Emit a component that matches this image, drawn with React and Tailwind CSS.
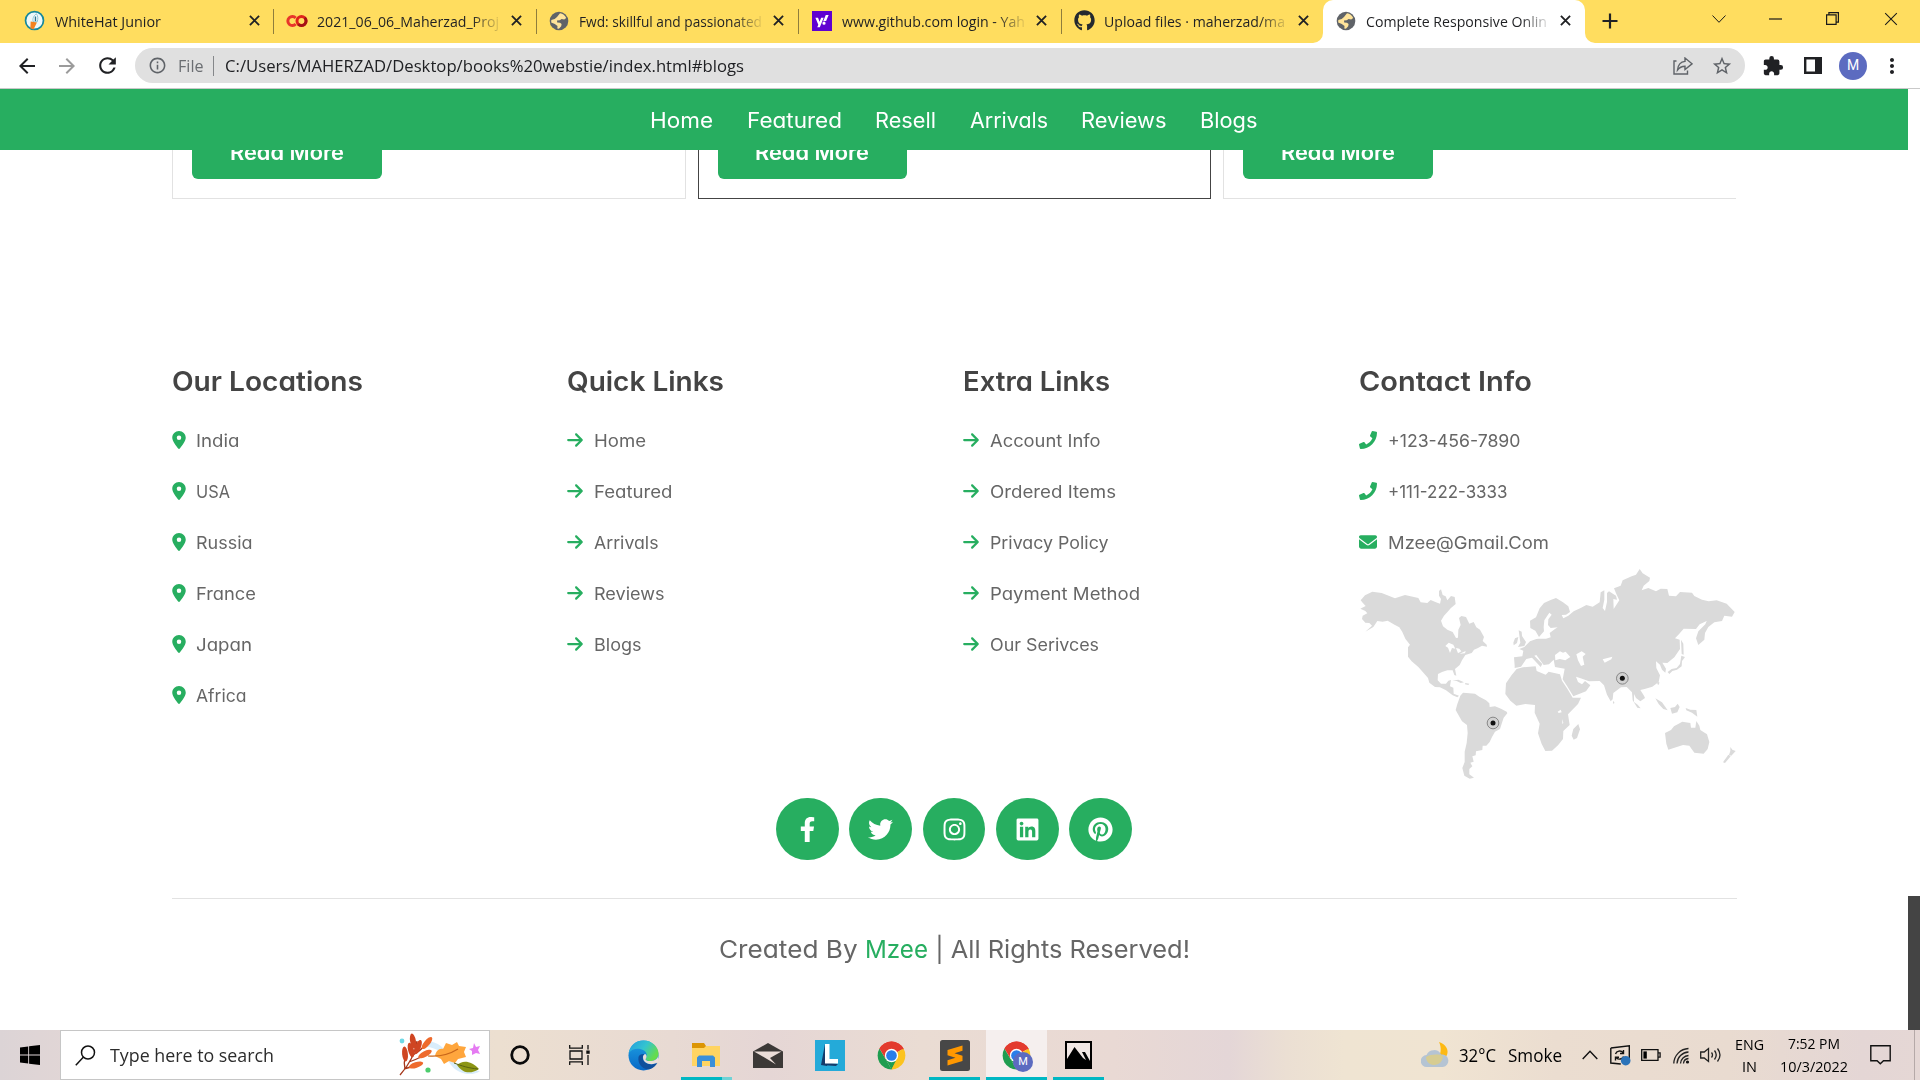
import { useLayoutEffect, useRef } from "react";
import { FaPhone, FaFacebookF, FaTwitter, FaInstagram, FaLinkedin, FaPinterest, FaGithub, FaYahoo } from "react-icons/fa";
import { FaLocationDot, FaArrowRight, FaEnvelope } from "react-icons/fa6";
import { MdExtension, MdStarBorder, MdMoreVert, MdRefresh, MdArrowBack, MdArrowForward, MdInfoOutline } from "react-icons/md";

/* Single-line text spanning a given width: a slight horizontal stretch first, tracking for the rest. */
function Fit({ w, className = "", children }) {
  const ref = useRef(null);
  useLayoutEffect(() => {
    const el = ref.current;
    el.style.letterSpacing = "0px";
    el.style.transform = "none";
    el.style.width = "auto";
    const natural = el.getBoundingClientRect().width;
    const stretch = Math.min(1.09, Math.max(0.9, w / natural));
    const n = el.textContent.length;
    el.style.letterSpacing = (w / stretch - natural) / n + "px";
    el.style.width = w + "px";
    el.style.transform = `scaleX(${stretch})`;
  }, [w]);
  return (
    <span ref={ref} className={"inline-block shrink-0 origin-left whitespace-pre " + className}>
      {children}
    </span>
  );
}

const Globe = () => (
  <svg viewBox="0 0 20 20" className="h-5 w-5">
    <circle cx="10" cy="10" r="9.3" fill="#5f6368" />
    <path d="M11 2.2c2.8.4 5.2 2.2 6.2 4.8l-2 1.4-2.6-.5-1.8 1.3-2.8.2.2 2 2.8.3 1.6 1.4-.4 2.2-2.3 2.4-1.6-.2.2-2.5-2.7-1.9-3.6-1.5.1-2.5 3.4-1 2.3-2.2z" fill="#ffe49a" />
  </svg>
);

const Rocket = () => (
  <svg viewBox="0 0 22 22" className="h-[21px] w-[21px]">
    <circle cx="11" cy="11" r="9.4" fill="#eef8fa" stroke="#16889c" strokeWidth="1.8" />
    <path d="M13 4c1.5 2 2 5 .8 8.5h-4C8.600 9.500 10 6 13 4z" fill="#fff" stroke="#67b3c6" strokeWidth=".8" />
    <path d="M12 6.800v5" stroke="#27728e" strokeWidth="1.500" />
    <path d="M7 12l6.500 1-3.500 7.500-3.400-1.300z" fill="#f5821f" />
  </svg>
);

const Colab = () => (
  <svg viewBox="0 0 22 14" className="h-[14px] w-[22px]">
    <path d="M9.700 4A4.500 4.500 0 1 0 9.700 10" fill="none" stroke="#e8352b" strokeWidth="3" />
    <circle cx="15.500" cy="7" r="4.500" fill="none" stroke="#e0231c" strokeWidth="3" />
    <path d="M12.300 10.200a4.500 4.500 0 0 0 6.400-6.400" fill="none" stroke="#a31216" strokeWidth="3" />
  </svg>
);

const Yahoo = () => (
  <span className="flex h-5 w-5 items-center justify-center bg-[#5f01d1] text-white">
    <FaYahoo size={14} />
  </span>
);

const X = ({ s = 11, sw = 2, className = "text-[#202124]" }) => (
  <svg width={s} height={s} viewBox="0 0 12 12" className={className}>
    <path d="M1 1l10 10M11 1L1 11" stroke="currentColor" strokeWidth={sw} />
  </svg>
);

const tabs = [
  { icon: <Rocket />, text: "WhiteHat Junior", w: 106 },
  { icon: <Colab />, text: "2021_06_06_Maherzad_Proj", w: 182 },
  { icon: <Globe />, text: "Fwd: skillful and passionated", w: 183 },
  { icon: <Yahoo />, text: "www.github.com login - Yah", w: 183 },
  { icon: <FaGithub size={21} className="text-[#24292f]" />, text: "Upload files · maherzad/ma", w: 181 },
  { icon: <Globe />, text: "Complete Responsive Onlin", w: 181, active: true },
];

function Tab({ t, first }) {
  return (
    <div className={"relative flex h-[43px] w-[262.400px] shrink-0 items-center pb-[2px] pl-[12.500px] " + (t.active ? "rounded-t-[10px] bg-white" : "")}>
      <span className="flex w-[22px] shrink-0 justify-center">{t.icon}</span>
      <span className="ml-[9px] flex w-[184px] shrink-0 overflow-hidden [mask-image:linear-gradient(to_right,#000_84%,transparent_101%)]">
        <Fit w={t.w} className="font-['Open_Sans'] text-[14.800px] leading-[22px] text-[#1f2023]">{t.text}</Fit>
      </span>
      <span className="ml-[7.500px] flex w-4 shrink-0 justify-center"><X /></span>
      {!first && !t.active && <span className="absolute left-0 top-[9px] h-[25px] w-px bg-[#8f7d3c]" />}
      {t.active && (
        <>
          <svg className="absolute -left-[10px] bottom-0" width="10" height="10"><path d="M10 0v10H0A10 10 0 0 0 10 0z" fill="#fff" /></svg>
          <svg className="absolute -right-[10px] bottom-0" width="10" height="10"><path d="M0 0v10h10A10 10 0 0 1 0 0z" fill="#fff" /></svg>
        </>
      )}
    </div>
  );
}

function TabBar() {
  return (
    <div className="flex h-[43px] bg-[#ffdd5f] pl-[11px]">
      {tabs.map((t, i) => <Tab key={i} t={t} first={i === 0} />)}
      <div className="flex w-[33px] shrink-0 items-center justify-end">
        <svg width="16" height="16" viewBox="0 0 16 16" className="-mt-px"><path d="M8 .5v15M.5 8h15" stroke="#202124" strokeWidth="2.200" /></svg>
      </div>
      <div className="ml-[94px] flex h-[37px] shrink-0 items-center text-[#1a1a1a]">
        <svg width="14" height="8" viewBox="0 0 14 8"><path d="M.5 .5L7 7.300 13.500.5" fill="none" stroke="currentColor" /></svg>
        <svg width="13" height="2" viewBox="0 0 13 2" className="ml-[43px]"><path d="M0 1h13" stroke="currentColor" strokeWidth="1.200" /></svg>
        <svg width="13" height="13" viewBox="0 0 13 13" className="ml-[44px]"><path d="M.6 2.900h9.500v9.500H.6zM2.900 2.900V.6h9.500v9.500h-2.300" fill="none" stroke="currentColor" strokeWidth="1.200" /></svg>
        <X s={14} sw={0.9} className="ml-[45px] text-[#1a1a1a]" />
      </div>
    </div>
  );
}

function Toolbar() {
  return (
    <div className="flex h-[46px] items-center border-b border-[#c9c9c9] bg-white pl-[15px] text-[#202124]">
      <MdArrowBack size={24} />
      <MdArrowForward size={24} className="ml-4 text-[#9b9b9b]" />
      <MdRefresh size={25} className="ml-4" />
      <div className="ml-[15px] flex h-[35px] w-[1610px] items-center rounded-full bg-[#e0e0e0] pl-[13px] font-['Open_Sans'] text-[17px]">
        <MdInfoOutline size={19} className="text-[#5f6368]" />
        <Fit w={25.500} className="ml-[11px] text-[#6b6e72]">File</Fit>
        <span className="ml-[9px] h-5 w-px bg-[#85878a]" />
        <Fit w={519} className="ml-[11px] text-[#202124]">C:/Users/MAHERZAD/Desktop/books%20webstie/index.html#blogs</Fit>
        <svg width="20" height="18" viewBox="0 0 20 18" className="ml-auto" fill="none" stroke="#5f6368" strokeWidth="1.400">
          <path d="M3.500 4H1v13h13.500v-3.500" />
          <path d="M12 1l7 5.800-7 5.700V9.200c-3.500 0-5.500 1-7.500 3.800C5 8 7.500 4.800 12 4.400z" />
        </svg>
        <MdStarBorder size={22} className="ml-[18px] mr-[12px] text-[#5f6368]" />
      </div>
      <MdExtension size={22} className="ml-[17px]" />
      <svg width="18" height="17" viewBox="0 0 18 17" className="ml-[20px]"><path d="M1.200 1.200h15.600v14.600H1.200z" fill="#fff" stroke="#202124" strokeWidth="2.400" /><path d="M11 0h7v17h-7z" fill="#202124" /></svg>
      <span className="ml-[17px] flex h-7 w-7 items-center justify-center rounded-full bg-[#5c6bc0] font-['Roboto'] text-[14px] text-white">M</span>
      <MdMoreVert size={24} className="ml-[13px]" />
    </div>
  );
}

const nav = [["Home", 63], ["Featured", 95], ["Resell", 61], ["Arrivals", 78], ["Reviews", 85.500], ["Blogs", 57.500]];

const cols = [
  { title: "Our Locations", tw: 191, Icon: FaLocationDot, size: 18, slot: "w-[24px]", items: [["India", 43.500], ["USA", 34], ["Russia", 56.500], ["France", 60], ["Japan", 56], ["Africa", 50.500]] },
  { title: "Quick Links", tw: 157, Icon: FaArrowRight, size: 18, slot: "w-[27px]", items: [["Home", 52], ["Featured", 78.500], ["Arrivals", 64.500], ["Reviews", 70.500], ["Blogs", 47.500]] },
  { title: "Extra Links", tw: 147, Icon: FaArrowRight, size: 18, slot: "w-[27px]", items: [["Account Info", 110.500], ["Ordered Items", 126], ["Privacy Policy", 118.500], ["Payment Method", 150], ["Our Serivces", 109]] },
  { title: "Contact Info", tw: 173, Icon: FaPhone, size: 18, slot: "w-[29px]", items: [["+123-456-7890", 132.500], ["+111-222-3333", 119.500], ["Mzee@Gmail.Com", 161]] },
];

function Pulse({ x, y }) {
  return (
    <g>
      <circle cx={x} cy={y} r="17.500" fill="#d2d2d2" stroke="#777" strokeWidth="2.500" />
      <circle cx={x} cy={y} r="7.500" fill="#111" />
    </g>
  );
}

function WorldMap() {
  return (
    <svg viewBox="57 55 1131 642" className="h-[214px] w-[377px]" fill="#dadada">
      <path d="M62 152L75 137 97 126 125 130 165 146 195 136 235 145 242 158 262 160 272 151 288 158 300 162 303 148 297 138 297 124 303 119 308 136 317 140 322 152 333 139 344 142 347 163 332 176 325 184 312 198 303 213 309 230 322 240 338 247 348 265 354 264 355 240 362 226 357 205 364 199 378 202 388 222 401 217 409 233 420 240 432 262 428 274 440 285 441 291 426 288 414 295 402 300 395 310 376 316 366 332 359 346 345 358 349 378 343 376 338 362 322 362 306 367 294 373 293 392 303 402 318 402 325 393 333 391 330 410 340 414 341 432 357 438 352 443 338 437 318 422 300 413 285 412 268 399 264 385 251 370 235 352 215 335 204 321 204 293 210 285 196 267 187 247 178 233 165 226 143 213 128 216 112 214 100 232 76 246 96 228 88 220 76 219 66 208 68 198 82 191 76 184 61 177 77 169 68 159z" />
      <path d="M316 289l10-10 14 6 6 12-10-2-6 15-6-16zM348 295l10 2 6 8-10 6zM359 312l18-8-2 7z" fill="#fff" />
      <path d="M337 393l18-3 17 8-10 2-12-6zM376 400l12 2-3 4-10-2z" />
      <path d="M361 438L369 429 388 431 405 432 418 441 438 452 448 461 449 472 465 470 483 477 500 486 502 491 491 504 486 519 480 538 465 546 456 562 449 577 439 588 428 588 427 601 408 605 407 617 397 620 401 636 391 639 397 650 388 658 388 674 402 684 389 687 373 678 367 655 374 637 374 606 380 580 383 550 381 526 366 515 354 494 347 481 352 463z" />
      <path d="M524 348L522 323 547 320 550 303 538 298 553 292 570 275 589 268 596 267 618 267 632 263 629 250 645 238 653 233 632 235 624 226 625 209 635 195 628 189 613 212 611 232 612 245 597 262 586 243 571 235 570 213 588 203 599 176 612 160 632 151 648 145 669 158 685 170 690 187 678 195 665 196 670 206 685 198 701 185 722 175 739 166 758 171 779 158 782 128 793 122 793 150 788 175 795 184 801 157 801 130 807 125 828 138 831 150 820 148 821 178 838 152 828 131 822 116 842 108 848 92 875 80 888 75 899 58 908 71 930 84 928 94 911 108 905 122 925 115 948 125 962 117 982 118 987 138 1008 140 1020 127 1056 129 1063 139 1086 150 1106 155 1130 152 1160 162 1184 187 1176 201 1153 198 1146 214 1123 218 1105 232 1095 250 1093 270 1075 286 1068 266 1075 245 1096 224 1100 214 1079 224 1068 238 1031 237 1018 252 1005 266 1019 270 1020 298 1003 323 982 340 967 339 978 357 976 369 966 360 960 345 948 335 949 355 960 377 956 397 937 411 914 418 901 421 912 438 915 445 901 455 888 445 882 433 882 457 893 465 902 476 892 474 878 452 876 428 860 412 843 413 820 430 818 449 812 455 801 435 792 407 779 394 747 395 722 386 708 381 714 397 726 404 735 394 751 407 738 425 700 440 683 412 668 389 674 357 645 352 641 330 627 344 611 346 589 316 583 318 607 343 602 352 576 324 559 328 543 351 524 355z" />
      <path d="M645 316l15-11 9 4 8-3 14 16-15 10-17-4-13 4zM709 314l16-9 12 8-9 8 5 24-10 4-9-17zM788 329l29-8-3 8-20 10z" fill="#fff" />
      <path d="M520 279l5-13 10-4-4 18-10 7zM536 242l9 4 1 13 12 18-5 12-19 3 7-13z" />
      <path d="M530 358L549 353 587 350 590 364 617 375 626 366 660 374 666 393 682 417 698 444 723 444 714 463 684 494 689 526 670 544 669 568 654 587 636 603 616 604 605 583 594 551 599 522 584 489 585 466 556 463 529 468 511 453 496 433 498 401 515 376z" />
      <path d="M715 523l5 16-9 26-10 5-6-12 5-20z" />
      <path d="M653 486l9-6 3 8-9 2zM667 508l3 12-3 3z" fill="#fff" />
      <path d="M1023 270l7 12 1 33-6-2zM1024 318l11 4-9 12-1 16-14 10-14 4-9 9-5-6 12-9 15-3 10-12zM952 398l6-1-1 8-5-1zM819 453l5 7-5 2zM946 446l20 12 17 24-13-4-14-15zM991 475l14-3 8-10 6 10-7 16-16 4zM1037 475l14 5 18 1 3 20-16-12-17-7z" />
      <path d="M975 550L993 541 1002 530 1027 516 1051 520 1053 534 1066 534 1069 514 1078 528 1081 541 1101 554 1108 577 1103 598 1091 612 1063 609 1048 588 1029 586 1008 593 985 600 979 582zM1171 592l6 8 10 4-13 14-7-2 4-12zM1165 615l7 5-17 20-6-2z" />
      <Pulse x={459} y={520} />
      <Pulse x={847} y={386} />
    </svg>
  );
}

function Card({ dark, last }) {
  return (
    <div className={"flex h-full flex-1 items-start border-b border-l pl-[19px] " + (dark ? "border-r border-[#444]" : last ? "border-[#e2e2e2]" : "border-r border-[#e2e2e2]")}>
      <div className="flex h-[29px] w-[189.500px] items-end justify-center overflow-hidden rounded-b-[6px] bg-[#27ae60]">
        <Fit w={114} className="mb-[12px] text-[20.800px] font-semibold leading-[28px] text-white">Read More</Fit>
      </div>
    </div>
  );
}

function Page() {
  return (
    <div className="flex h-[941px]">
      <main className="flex w-[1908px] flex-col bg-white font-['Inter'] [font-feature-settings:'cv11']">
        <nav className="flex h-[61px] shrink-0 items-center justify-center gap-[33.500px] bg-[#27ae60] pt-[2px] text-[21.200px] text-white">
          {nav.map(([t, w]) => <Fit key={t} w={w}>{t}</Fit>)}
        </nav>
        <div className="ml-[172px] flex h-[49px] w-[1564px] shrink-0 gap-[12px]">
          <Card /><Card dark /><Card last />
        </div>
        <footer className="ml-[171.500px] mt-[162px] flex w-[1565px] flex-col">
          <div className="grid h-[437px] grid-cols-[395.800px_395.800px_395.800px_377px] content-start">
            {cols.map((c) => (
              <section key={c.title}>
                <h3 className="flex h-[42px] items-center text-[27px] font-semibold text-[#444]"><Fit w={c.tw}>{c.title}</Fit></h3>
                <ul className="mt-[12px] text-[17.300px] text-[#666]">
                  {c.items.map(([t, w]) => (
                    <li key={t} className="flex h-[51px] items-center">
                      <span className={"-mt-px flex shrink-0 text-[#27ae60] " + c.slot}>
                        {t.includes("@") ? <FaEnvelope size={18} /> : <c.Icon size={c.size} className={c.Icon === FaLocationDot ? "w-[14px]" : c.Icon === FaArrowRight ? "-ml-px" : ""} />}
                      </span>
                      <Fit w={w} className="mt-px">{t}</Fit>
                    </li>
                  ))}
                </ul>
                {c.title === "Contact Info" && <WorldMap />}
              </section>
            ))}
          </div>
          <div className="flex h-[62px] justify-center gap-[10.500px]">
            {[FaFacebookF, FaTwitter, FaInstagram, FaLinkedin, FaPinterest].map((I, i) => (
              <span key={i} className="flex h-[62px] w-[62.700px] items-center justify-center rounded-full bg-[#27ae60] text-white"><I size={25} /></span>
            ))}
          </div>
          <div className="mt-[38px] flex items-center justify-center border-t border-[#e2e2e2] pt-[31px] text-[24.500px] leading-[38px] text-[#666]">
            <Fit w={146}>{"Created By "}</Fit>
            <Fit w={63} className="text-[#27ae60]">Mzee</Fit>
            <Fit w={262}>{" | All Rights Reserved!"}</Fit>
          </div>
        </footer>
      </main>
      <div className="flex w-3 items-end bg-white"><span className="h-[134px] w-3 bg-[#444]" /></div>
    </div>
  );
}

const ChromeLogo = ({ s = 29 }) => (
  <svg width={s} height={s} viewBox="0 0 48 48">
    <path d="M24 24L4.100 12.500A23 23 0 0 1 43.900 12.500z" fill="#e33b2e" />
    <path d="M24 24L43.900 12.500A23 23 0 0 1 24 47z" fill="#fcc31e" />
    <path d="M24 47A23 23 0 0 1 4.100 12.500L15 31z" fill="#1f9d50" />
    <path d="M24 24L14.500 30 24 47 33 29z" fill="#1f9d50" />
    <path d="M24 47l10-17.500L24 24h20A23 23 0 0 1 24 47z" fill="#fcc31e" />
    <path d="M4.100 12.500A23 23 0 0 1 43.900 12.500L44 13.500H24L14 29z" fill="#e33b2e" />
    <circle cx="24" cy="24" r="11" fill="#fff" />
    <circle cx="24" cy="24" r="8.800" fill="#2a7de9" />
  </svg>
);

const Edge = () => (
  <svg width="31" height="31" viewBox="0 0 31 31">
    <defs>
      <linearGradient id="e1" x1="0" y1="0" x2="1" y2=".5"><stop offset="0" stopColor="#239be0" /><stop offset=".55" stopColor="#33c4d0" /><stop offset="1" stopColor="#65dc4c" /></linearGradient>
      <linearGradient id="e2" x1="0" y1="0" x2="0" y2="1"><stop offset="0" stopColor="#1ea0e2" /><stop offset="1" stopColor="#0868c6" /></linearGradient>
    </defs>
    <circle cx="15.500" cy="15.500" r="15" fill="url(#e2)" />
    <path d="M.8 13C2 5 8 .5 15.500.5 24 .5 30.500 7 30.500 13.500c0 5-4 7.500-8 7.500-4 0-5.500-1.500-4.500-3 1.500-2 1-5.500-2-7.500C11 7.500 4 8.500.8 13z" fill="url(#e1)" />
    <path d="M10.500 17c-1 7 4 13 11 12.200 3.500-1 6.500-3.600 8-6.500-6 3.300-13 1.600-14.600-3.700-.5-2.500.6-4.500 1.600-5-3-.3-5.500 1-6 3z" fill="#104f9c" />
    <path d="M15 16.500c.5-1.800 1.400-2.500 2.300-2.600 1.500 1.300 1.700 3 .6 4.500-.8 1.300.4 2.600 4.600 2.600 3 0 6-1 7.500-4.500v5.500c-5 4-15.500 2.500-15-5.500z" fill="#eaded8" />
  </svg>
);

const Folder = () => (
  <svg width="28" height="24" viewBox="0 0 28 24">
    <path d="M0 0h12l2 3v6H0z" fill="#dc9504" />
    <path d="M0 5h12l2-2h14v20H0z" fill="#ffd462" />
    <path d="M5 24V14.500L7 12.500h14l2 2V24h-5v-6h-8v6z" fill="#3a8fd9" />
  </svg>
);

const Mail = () => (
  <svg width="30" height="25" viewBox="0 0 30 25">
    <path d="M15 0l15 8.500V25H0V8.500z" fill="#3c3937" />
    <path d="M1 8.500h27.500L17 15l6 6.500-9-5.500z" fill="#eaddd8" />
  </svg>
);

const LApp = () => (
  <svg width="30" height="31" viewBox="0 0 30 31">
    <path d="M0 0h30v31H0z" fill="#24aad9" />
    <path d="M10 4L6 25l6 1V4zM6 25l15 1 2-2-13-2z" fill="#143c6c" />
    <path d="M10 4h4.500v15H23v4.500H10z" fill="#fff" />
  </svg>
);

const Sublime = () => (
  <svg width="30" height="31" viewBox="0 0 30 31">
    <rect width="30" height="31" rx="2.500" fill="#474747" />
    <path d="M22.500 5.500v5.200l-8 2.500 8 2.600v5.200L7.500 25.500v-5.200l8-2.500-8-2.600V10z" fill="#ff9800" />
  </svg>
);

const Photos = () => (
  <svg width="27" height="28" viewBox="0 0 27 28">
    <path d="M0 0h27v28H0z" fill="#000" />
    <path d="M2 2h23v18l-5-9-3 0 4 8-3-2-8.500-11L2 18z" fill="#f1e7e4" />
  </svg>
);

const Leaves = () => (
  <svg width="84" height="44" viewBox="0 0 84 44">
    <path d="M26 8c14 0 20 8 27 18 7 9 16 11 28 12-8 6-22 3-29-6-7-10-12-18-26-18z" fill="#d9edfb" />
    <path d="M1 42C9 33 16 22 18 8M5 36c5-1 8-2 12-5M10 29c6-2 10-4 14-6M14 22c5-3 9-6 12-10M6 36c-1-5-1-8 0-12M13 25c-1-5-2-9-1-14" stroke="#a6381c" strokeWidth="1.300" fill="none" />
    {[[14, 8, -10], [28, 10, 40], [6, 21, -6], [26, 21, 62], [12, 17, -14], [17, 32, 72], [19, 14, 22]].map(([x, y, r], i) => (
      <ellipse key={i} cx={x} cy={y} rx="2.900" ry="7.500" transform={`rotate(${r} ${x} ${y})`} fill={i % 2 ? "#ee6a2c" : "#cf4522"} />
    ))}
    <path d="M36 23c1-5 4-8 8-7l3-6 6 2 5-3 2 4 7 1-2 5 2 5-8 2-3 4-6-2-5 3-3-5z" fill="#ffa63d" />
    <path d="M29 23c12 1 22-2 30-7" stroke="#c8661a" strokeWidth="1.200" fill="none" />
    <path d="M58 32c5-5 14-5 22 4-8 5-16 5-22-4z" fill="#8c9514" />
    <path d="M55 30c8 3 14 5 24 6" stroke="#59620f" fill="none" />
    <path d="M75 10l2 4 4-1-2 4 2 4-4-1-4 2 0-4-3-2 4-1z" fill="#e57bf2" />
    <circle cx="3" cy="8" r="2.400" fill="#6fd9e6" />
    <circle cx="29" cy="37" r="2.600" fill="#4ccd6d" />
  </svg>
);

const Slot = ({ w, children, className = "" }) => (
  <div className={"flex h-full shrink-0 items-center justify-center " + className} style={{ width: w }}>{children}</div>
);

function Taskbar() {
  return (
    <div className="flex h-[50px] items-center bg-[linear-gradient(to_right,#dcd4d6_0%,#e2d6d6_4%,#ecdfd0_26%,#e8dad3_35%,#e5d6d5_40%,#eadcd3_48%,#e9d9d4_58%,#e4d6d7_64%,#ebdfd3_67%,#efe4d2_70%,#f0e4d2_75%,#ebddd0_81%,#e9dbd0_90%,#e4d6d5_97%,#e5d7d5_100%)] font-['Open_Sans'] text-black">
      <Slot w={60}>
        <svg width="20" height="20" viewBox="0 0 20 20"><path d="M0 2.600l8.200-1.200v8.100H0zM9.100 1.200L20 0v9.500H9.100zM0 10.400h8.200v8.200L0 17.500zM9.100 10.400H20V20L9.100 18.700z" /></svg>
      </Slot>
      <div className="flex h-[50px] w-[430px] shrink-0 items-center border border-[#c6c6c6] bg-white pl-[14px]">
        <svg width="21" height="21" viewBox="0 0 21 21" fill="none" stroke="#111" strokeWidth="1.500"><circle cx="13" cy="7.500" r="6.500" /><path d="M8.500 12L.8 20.200" /></svg>
        <Fit w={164} className="ml-[14px] text-[18px] text-[#2c2c2c]">Type here to search</Fit>
        <span className="ml-auto mr-[6px]"><Leaves /></span>
      </div>
      <Slot w={60}><svg width="20" height="20" viewBox="0 0 20 20"><circle cx="10" cy="10" r="8.300" fill="none" stroke="#0a0a0a" strokeWidth="2.800" /></svg></Slot>
      <Slot w={59}>
        <svg width="21" height="20" viewBox="0 0 21 20" fill="none" stroke="#111" strokeWidth="1.300"><path d="M.7 0v3.200h12.600V0M1 6h12v8H1zM.7 20v-3.200h12.600V20M19 0v4.500M19 10v10" /><path d="M17.300 5.500h3.400v3.300h-3.400z" fill="#111" stroke="none" /></svg>
      </Slot>
      <Slot w={69}><Edge /></Slot>
      <div className="relative flex h-full w-[53px] shrink-0 items-center justify-center"><span className="ml-[2px]"><Folder /></span><span className="absolute bottom-0 left-[3px] flex h-[3px] w-[51px] bg-[#6fd2d6]"><span className="w-[41px] bg-[#00b7c3]" /></span></div>
      <Slot w={73}><Mail /></Slot>
      <Slot w={52}><LApp /></Slot>
      <Slot w={71}><ChromeLogo s={29} /></Slot>
      <div className="relative ml-[2px] flex h-full w-[51px] shrink-0 items-center justify-center"><Sublime /><span className="absolute bottom-0 h-[3px] w-full bg-[#00b7c3]" /></div>
      <div className="relative ml-[6px] flex h-full w-[61px] shrink-0 items-center justify-center bg-[#f5efee]">
        <ChromeLogo s={29} />
        <span className="absolute left-[27px] top-[22px] flex h-5 w-5 items-center justify-center rounded-full bg-[#5c6bc0] font-['Roboto'] text-[11px] text-white">M</span>
        <span className="absolute bottom-0 h-[3px] w-full bg-[#00b7c3]" />
      </div>
      <div className="relative ml-[6px] flex h-full w-[51px] shrink-0 items-center justify-center"><Photos /><span className="absolute bottom-0 h-[3px] w-full bg-[#00b7c3]" /></div>
      <svg width="28" height="26" viewBox="0 0 28 26" className="ml-[317px]">
        <path d="M18 0c7 2 10 8 8 13-2 4-6 5-10 4 4-4 5-11 2-17z" fill="#fdb913" />
        <path d="M6 25a6 6 0 0 1-.5-12A8 8 0 0 1 20 12.500 6 6 0 0 1 22 25z" fill="#b5c4d3" />
        <path d="M5 15c5-3 13-3 17-1 0 5-4 9-9 9s-8-4-8-8z" fill="#d6cc92" />
      </svg>
      <Fit w={37} className="ml-[10px] text-[17.500px]">32°C</Fit>
      <Fit w={54} className="ml-[12px] text-[17.500px]">Smoke</Fit>
      <svg width="16" height="10" viewBox="0 0 16 10" className="ml-[20px]"><path d="M.7 9L8 1.200 15.300 9" fill="none" stroke="#111" strokeWidth="1.400" /></svg>
      <svg width="21" height="21" viewBox="0 0 21 21" className="ml-[12px]" fill="none" stroke="#111" strokeWidth="1.400"><path d="M.8 3L19.300.8v13M.8 3v15l10 1M5.500 9a4.500 4.500 0 0 1 7.500-1.500M13.500 5v3.500h-3.500M13.500 11.500a4.500 4.500 0 0 1-7 1.500M5.500 15.500v-3.200H9" /><circle cx="15.700" cy="15.700" r="4.800" fill="#2b73b9" stroke="none" /></svg>
      <svg width="20" height="12" viewBox="0 0 20 12" className="ml-[10px]"><path d="M.7.7h16.300v10.600H.7zM17.500 3.800h1.600v4.400h-1.600" fill="none" stroke="#111" strokeWidth="1.300" /><path d="M2.400 2.400h3.400v7.200H2.400z" /></svg>
      <svg width="17" height="17" viewBox="0 0 17 17" className="ml-[12px]" fill="none" stroke="#222" strokeWidth="1.300"><path d="M.8 16.500A15.500 15.500 0 0 1 15.500 1.500M4 16.500A12 12 0 0 1 15.500 5M7.500 16.500a8.500 8.500 0 0 1 8-8M10.500 16.500a5.500 5.500 0 0 1 5-5" /><circle cx="14.500" cy="15" r="1.600" fill="#111" stroke="none" /></svg>
      <svg width="21" height="16" viewBox="0 0 21 16" className="ml-[10px]" fill="none" stroke="#222" strokeWidth="1.300"><path d="M.7 5h3.500L8.500 1.500v13L4.200 11H.7zM11.500 5.500q2 2.500 0 5M14.500 3.500q3.500 4.500 0 9M17.500 1.500q5 6.500 0 13" /></svg>
      <div className="-ml-[2px] flex w-[60px] flex-col items-center text-[14.800px] leading-[22px]"><Fit w={29}>ENG</Fit><Fit w={15}>IN</Fit></div>
      <div className="ml-px flex w-[68px] flex-col items-center pb-px text-[14.800px] leading-[22.500px]"><Fit w={52}>7:52 PM</Fit><Fit w={68}>10/3/2022</Fit></div>
      <svg width="21" height="20" viewBox="0 0 21 20" className="ml-[22px]"><path d="M.8.8h19.400v15h-6.700l-3.200 3-3.200-3H.8z" fill="none" stroke="#111" strokeWidth="1.400" /></svg>
      <span className="ml-auto mr-[5px] h-full w-px bg-[#b5a9a8]" />
    </div>
  );
}

export default function App() {
  return (
    <div className="flex h-[1080px] w-[1920px] flex-col overflow-hidden bg-white">
      <TabBar />
      <Toolbar />
      <Page />
      <Taskbar />
    </div>
  );
}
